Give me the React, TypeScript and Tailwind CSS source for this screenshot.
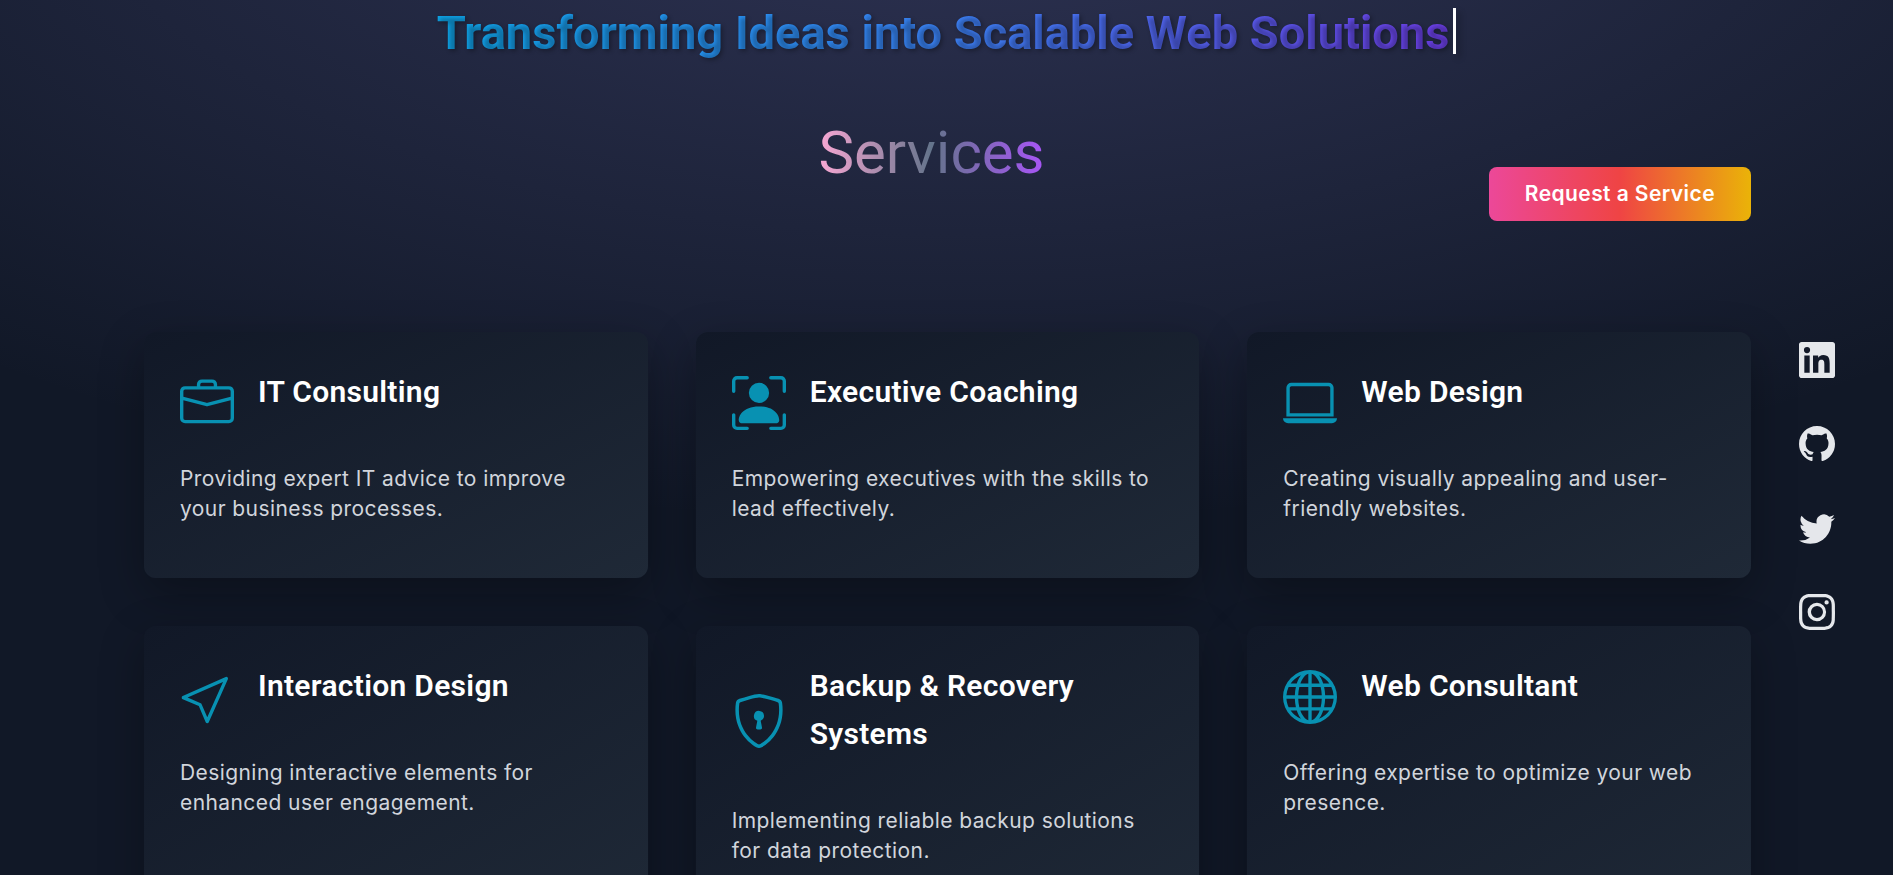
import {
  BsBriefcase,
  BsCursor,
  BsGithub,
  BsGlobe,
  BsInstagram,
  BsLaptop,
  BsPersonBoundingBox,
  BsShieldLock,
  BsTwitter,
} from "react-icons/bs";
import type { ComponentType } from "react";

type Icon = ComponentType<{ className?: string }>;

interface Service {
  title: string;
  text: string;
  icon: Icon;
}

const services: Service[] = [
  { title: "IT Consulting", text: "Providing expert IT advice to improve your business processes.", icon: BsBriefcase },
  { title: "Executive Coaching", text: "Empowering executives with the skills to lead effectively.", icon: BsPersonBoundingBox },
  { title: "Web Design", text: "Creating visually appealing and user-friendly websites.", icon: BsLaptop },
  { title: "Interaction Design", text: "Designing interactive elements for enhanced user engagement.", icon: BsCursor },
  { title: "Backup & Recovery Systems", text: "Implementing reliable backup solutions for data protection.", icon: BsShieldLock },
  { title: "Web Consultant", text: "Offering expertise to optimize your web presence.", icon: BsGlobe },
];

function LinkedInIcon({ className }: { className?: string }) {
  return (
    <svg viewBox="0 0 24 24" fill="currentColor" className={className} aria-hidden="true">
      <path d="M20.447 20.452h-3.554v-5.569c0-1.328-.027-3.037-1.852-3.037-1.853 0-2.136 1.445-2.136 2.939v5.667H9.351V9h3.414v1.561h.046c.477-.9 1.637-1.85 3.37-1.85 3.601 0 4.267 2.37 4.267 5.455v6.286zM5.337 7.433a2.062 2.062 0 0 1-2.063-2.065 2.064 2.064 0 1 1 2.063 2.065zm1.782 13.019H3.555V9h3.564v11.452zM22.225 0H1.771C.792 0 0 .774 0 1.729v20.542C0 23.227.792 24 1.771 24h20.451C23.2 24 24 23.227 24 22.271V1.729C24 .774 23.2 0 22.222 0h.003z" />
    </svg>
  );
}

const socials: { label: string; icon: Icon }[] = [
  { label: "LinkedIn", icon: LinkedInIcon },
  { label: "GitHub", icon: BsGithub },
  { label: "Twitter", icon: BsTwitter },
  { label: "Instagram", icon: BsInstagram },
];

function ServiceCard({ title, text, icon: Icon }: Service) {
  return (
    <article className="rounded-xl bg-linear-to-br/srgb from-[#111827] to-[#1f2937] px-9 pt-9 pb-[54px] shadow-[0_15px_45px_rgba(0,0,0,0.3)]">
      <div className="mb-[26px] flex items-center">
        <Icon className="mr-6 size-[54px] shrink-0 text-[#0891b2]" />
        <h2 className="mb-[22px] font-[Roboto,sans-serif] text-[30px] leading-[48px] font-semibold tracking-[0.01em] text-white">{title}</h2>
      </div>
      <p className="text-[21px] leading-[30px] tracking-[0.02em] text-gray-300">{text}</p>
    </article>
  );
}

export default function App() {
  return (
    <div className="h-screen overflow-x-hidden overflow-y-clip bg-[#111827] bg-[radial-gradient(ellipse_80%_80%_at_50%_-20%,rgba(120,119,198,0.3),rgba(255,255,255,0))] font-[Inter,sans-serif]">
      <header className="flex justify-center pt-2">
        <h1 className="flex items-start text-[47px] leading-[50px] font-bold [text-shadow:2px_2px_4px_rgba(0,0,0,0.3)]">
          <span className="bg-linear-to-r/srgb from-[#0ea5e9] via-[#3b82f6] to-[#6d3fe8] bg-clip-text font-[Roboto,sans-serif] text-transparent">
            Transforming Ideas into Scalable Web Solutions
          </span>
          <span className="ml-1 h-[46px] w-[3px] bg-white shadow-[4px_4px_6px_rgba(0,0,0,0.3)]" />
        </h1>
      </header>

      <main className="mr-[142px] ml-36">
        <div className="mt-[65px] flex items-start justify-center">
          <h2 className="mr-8 bg-linear-to-r/srgb from-[#f9a8d4] via-[#64748b] to-[#a855f7] bg-clip-text font-[Roboto,sans-serif] text-[60px] leading-[60px] font-normal text-transparent">
            Services
          </h2>
        </div>
        <div className="mb-[111px] flex justify-end">
          <button
            type="button"
            className="-mt-4 rounded-lg bg-linear-to-r/srgb from-[#ec4899] via-[#ef4444] to-[#eab308] px-9 py-3 text-[21px] leading-[30px] font-semibold tracking-[0.02em] text-white"
          >
            Request a Service
          </button>
        </div>
        <section className="grid grid-cols-3 gap-12" aria-label="Services">
          {services.map((service) => (
            <ServiceCard key={service.title} {...service} />
          ))}
        </section>
      </main>

      <nav className="fixed top-1/2 right-[58px] mt-12 flex -translate-y-1/2 flex-col gap-12" aria-label="Social links">
        {socials.map(({ label, icon: Icon }) => (
          <a key={label} href="#" aria-label={label} className="text-gray-200">
            <Icon className="size-9" />
          </a>
        ))}
      </nav>
    </div>
  );
}
